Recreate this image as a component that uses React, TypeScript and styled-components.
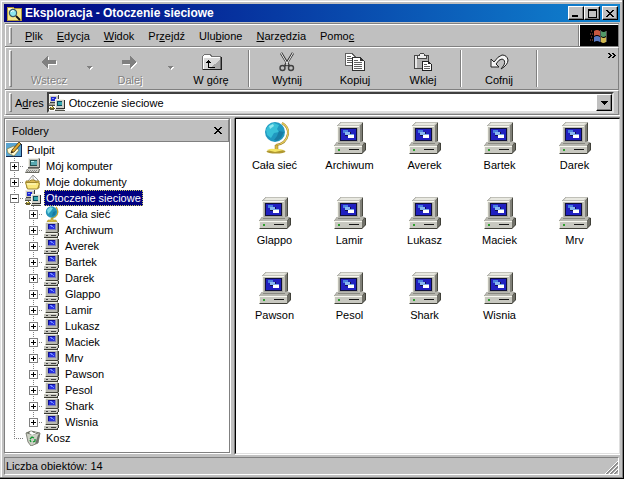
import React from 'react';
import styled, { createGlobalStyle, css } from 'styled-components';

const GlobalStyle = createGlobalStyle`
  * { box-sizing: border-box; }
  html, body { margin: 0; background: #c0c0c0; }
  body, button, select {
    font-family: "Liberation Sans", Arial, sans-serif;
    font-size: 11px;
    line-height: 14px;
    color: #000;
  }
  button { border: 0; padding: 0; background: none; }
  ul { list-style: none; margin: 0; padding: 0; }
  svg { display: block; flex: none; }
`;

const raised = css`
  border: 1px solid;
  border-color: #fff #000 #000 #fff;
  box-shadow: inset -1px -1px #808080;
  background: #c0c0c0;
`;

const Window = styled.div`
  display: flex;
  flex-direction: column;
  min-height: 100vh;
  padding: 4px;
  background: #c0c0c0;
  box-shadow: inset -1px -1px #000, inset -2px -2px #808080, inset 1px 1px #dfdfdf, inset 2px 2px #fff;
`;

const TitleBar = styled.header`
  display: flex;
  align-items: center;
  height: 18px;
  padding: 0 2px;
  background: linear-gradient(to right, #000080, #1084d0);
`;

const Title = styled.h1`
  flex: 1;
  margin: 0 0 0 3px;
  font-size: 12px;
  line-height: 16px;
  font-weight: bold;
  color: #fff;
  white-space: nowrap;
`;

const CaptionButton = styled.button<{ $apart?: boolean }>`
  ${raised}
  display: flex;
  align-items: center;
  justify-content: center;
  width: 16px;
  height: 14px;
  margin-left: ${p => (p.$apart ? 2 : 0)}px;
`;

const Band = styled.div<{ $height: number }>`
  display: flex;
  align-items: stretch;
  height: ${p => p.$height}px;
  padding-left: 2px;
  border: 1px solid;
  border-color: #fff #808080 #808080 #fff;
  box-shadow: 0 -1px #808080;
`;

const Bands = styled.div`
  display: flex;
  flex-direction: column;
  margin-top: 2px;
  padding: 0 1px;
  border-bottom: 1px solid #fff;
`;

const Grip = styled.span`
  flex: none;
  width: 3px;
  margin: 2px 0 2px 1px;
  border: 1px solid;
  border-color: #fff #808080 #808080 #fff;
`;

const MenuList = styled.nav`
  display: flex;
  flex: 1;
  align-items: center;
  padding-left: 6px;
`;

const MenuButton = styled.button`
  padding: 0 7px;
`;

const Throbber = styled.div`
  display: flex;
  align-items: center;
  justify-content: center;
  width: 38px;
  background: #000;
  box-shadow: -1px 0 #fff, -2px 0 #808080;
`;

const Tools = styled.div`
  display: flex;
  flex: 1;
  padding-left: 3px;
`;

const ToolButton = styled.button`
  display: flex;
  flex-direction: column;
  align-items: center;
  width: 68px;
  padding-top: 4px;
  gap: 1px;
  &:disabled {
    color: #808080;
    text-shadow: 1px 1px #fff;
  }
`;

const DropButton = styled.button`
  display: flex;
  align-items: center;
  justify-content: center;
  width: 13px;
`;

const ToolSeparator = styled.span`
  width: 2px;
  margin: 2px 3px;
  border-left: 1px solid #808080;
  border-right: 1px solid #fff;
`;

const Overflow = styled.button`
  align-self: flex-start;
  margin-left: auto;
  padding: 5px 2px 0;
`;

const AddressLabel = styled.label`
  align-self: center;
  padding: 0 3px;
`;

const Combo = styled.div`
  display: flex;
  flex: 1;
  align-items: center;
  margin: 1px 4px 1px 0;
  background: #fff;
  border: 2px solid;
  border-color: #404040 #dfdfdf #dfdfdf #404040;
`;

const ComboSelect = styled.select`
  flex: 1;
  height: 16px;
  margin-left: 4px;
  padding: 0;
  border: 0;
  outline: 0;
  appearance: none;
  background: transparent;
`;

const ComboArrow = styled.span`
  ${raised}
  display: flex;
  align-items: center;
  justify-content: center;
  align-self: stretch;
  width: 16px;
`;

const Body = styled.main`
  display: grid;
  grid-template-columns: 227px minmax(0, 1fr);
  gap: 4px;
  flex: 1;
  margin-top: 2px;
`;

const FolderPane = styled.section`
  display: flex;
  flex-direction: column;
  border: 1px solid;
  border-color: #808080 #fff #fff #808080;
  box-shadow: inset -1px -1px #808080;
`;

const PaneHeader = styled.div`
  display: flex;
  align-items: center;
  justify-content: space-between;
  height: 23px;
  margin-right: 1px;
  padding: 0 6px;
  border: 1px solid;
  border-color: #fff #808080 #808080 #fff;
`;

const PaneTitle = styled.h2`
  margin: 0;
  font-size: 11px;
  line-height: 14px;
  font-weight: normal;
`;

const Tree = styled.ul`
  flex: 1;
  margin: 0 1px 1px 0;
  background: #fff;
`;

const TreeRow = styled.div`
  display: flex;
  align-items: center;
  height: 16px;
  > svg { margin-left: 1px; }
`;

const Guide = styled.span<{ $line?: 'through' | 'last'; $branch?: boolean }>`
  display: flex;
  align-items: center;
  flex: none;
  width: 19px;
  height: 16px;
  padding-left: 5px;
  background-image:
    repeating-linear-gradient(to bottom, #808080 0 1px, transparent 1px 2px),
    repeating-linear-gradient(to right, #808080 0 1px, transparent 1px 2px);
  background-repeat: no-repeat;
  background-position: 9px 0, 9px 8px;
  background-size:
    ${p => (p.$line ? '1px' : '0')} ${p => (p.$line === 'last' ? '8px' : '16px')},
    ${p => (p.$branch ? '10px 1px' : '0 0')};
`;

const Expander = styled.button`
  display: flex;
  width: 9px;
  height: 9px;
  background: #fff;
`;

const TreeLabel = styled.span<{ $selected?: boolean }>`
  margin-left: 3px;
  padding: 0 1px;
  height: 16px;
  line-height: 14px;
  border: 1px dotted transparent;
  white-space: nowrap;
  ${p => p.$selected && css`
    color: #fff;
    background: #000080;
    border-color: #c8c860;
  `}
`;

const FileArea = styled.section`
  display: grid;
  grid-template-columns: repeat(auto-fill, 75px);
  grid-auto-rows: 75px;
  align-content: start;
  background: #fff;
  padding: 3px 0 0 1px;
  border: 1px solid;
  border-color: #000 #dfdfdf #dfdfdf #000;
  box-shadow: 0 -1px #808080, -1px 0 #808080, 0 1px #fff;
`;

const FileItem = styled.button`
  display: flex;
  flex-direction: column;
  align-items: center;
  justify-content: flex-start;
  gap: 4px;
`;

const StatusBar = styled.footer`
  display: flex;
  align-items: center;
  justify-content: space-between;
  height: 18px;
  margin: 3px 1px 0 0;
  padding-left: 1px;
  border: 1px solid;
  border-color: #808080 #fff #fff #808080;
`;

const Svg = ({ w = 16, h = 16, smooth, children }: { w?: number; h?: number; smooth?: boolean; children: React.ReactNode }) => (
  <svg width={w} height={h} viewBox={`0 0 ${w} ${h}`} fill="none" shapeRendering={smooth ? 'auto' : 'crispEdges'} aria-hidden="true">
    {children}
  </svg>
);

/* 16px icons */

const ExplorerIcon = () => (
  <Svg>
    <path d="M1 2h6l1 1h7v12H1z" fill="#f4e68c" stroke="#b09838" />
    <path d="M2 3h4v2H2z" fill="#fffbd0" />
    <g shapeRendering="auto">
      <circle cx="7" cy="8" r="3.6" fill="#8ce8f0" stroke="#385868" strokeWidth="1.2" />
      <path d="M5 7q1-2 3-1" stroke="#fff" />
      <path d="M10 11l4 4" stroke="#101010" strokeWidth="1.8" />
    </g>
  </Svg>
);

const DesktopIcon = () => (
  <Svg>
    <path d="M0 1h15v14H0z" fill="#5aa4d0" />
    <path d="M0 15h16V2h-1v12H0z" fill="#102850" />
    <g shapeRendering="auto">
      <path d="M1 7l7-3 5 4-5 6-6-3z" fill="#fffbd8" stroke="#807840" strokeWidth=".7" />
      <path d="M5 11l1-3 7-8 2 2-7 8z" fill="#e0a830" stroke="#403010" strokeWidth=".8" />
      <path d="M5 11l1-2 1 1z" fill="#000" />
    </g>
  </Svg>
);

const ComputerIcon = () => (
  <Svg smooth>
    <path d="M3 0h11l1 1v9H3z" fill="#585858" />
    <path d="M3 0h11v9H3z" fill="#c0c0b8" />
    <path d="M3 0h10v1H4v8H3z" fill="#f0f0e8" />
    <path d="M5 2h7v6H5z" fill="#205050" />
    <path d="M6 3h6v4H6z" fill="#58a8b0" />
    <path d="M6 3h3v1H6z" fill="#b8f0f0" />
    <path d="M3 10h11v1H3z" fill="#888880" />
    <path d="M2 11h13l-1 4H0z" fill="#686860" />
    <path d="M3 11h11l-1 3H1z" fill="#d8d8d0" />
    <path d="M3 12.5h9M2 13.5h10" stroke="#888" strokeDasharray="1 1" />
  </Svg>
);

const DocumentsIcon = () => (
  <Svg smooth>
    <path d="M3 7l5-6 5 5v5H3z" fill="#fff" stroke="#787878" strokeWidth=".8" />
    <path d="M8 2v3l3 2" stroke="#a0a0a0" strokeWidth=".8" />
    <path d="M1 7h4l1-1h3l1 1h4v7H2z" fill="#dcb850" stroke="#a08830" />
    <path d="M0.5 8.5h12l2 1-2 5.500h-10z" fill="#fae87c" stroke="#a08830" />
    <path d="M2 10h9" stroke="#fffbd0" />
  </Svg>
);

const NetworkIcon = () => (
  <Svg>
    <path d="M1 0h9v8H1z" fill="#404040" />
    <path d="M0 0h9v7H0z" fill="#c8c8c0" />
    <path d="M0 0h9v1H1v6H0z" fill="#f0f0e8" />
    <path d="M2 2h5v4H2z" fill="#2028d0" />
    <path d="M3 3h2v1H3z" fill="#8098ff" />
    <path d="M0 8h7v2H0z" fill="#a8a8a0" />
    <path d="M0 10h7v1H0z" fill="#505048" />
    <path d="M7 5h9v9H7z" fill="#303030" />
    <path d="M6 4h9v9H6z" fill="#d0d0c8" />
    <path d="M6 4h9v1H7v8H6z" fill="#f4f4ec" />
    <path d="M8 6h5v5H8z" fill="#084858" />
    <path d="M9 7h4v3H9z" fill="#38a8b0" />
    <path d="M6 14h9v1H6z" fill="#c8c8c0" />
    <path d="M6 15h10v1H6z" fill="#505048" />
    <path d="M3 11h1v4H3zM0 13h6v1H0zM1 12h4v3H1z" fill="#686030" />
    <path d="M2 12h2v1H2z" fill="#e8d850" />
  </Svg>
);

const GlobeIcon = () => (
  <Svg smooth>
    <path d="M12 1q4 6-1 10l-3 1" stroke="#c8a830" strokeWidth="1.4" />
    <circle cx="7.500" cy="6" r="5.700" fill="#2494b8" />
    <path d="M3 4l3-3 3 1-2 3-3 3z" fill="#78d8e4" />
    <path d="M9 6l3-1-1 4-3 1z" fill="#1878a0" />
    <path d="M7 12h2v2h3l1 2H3l1-2h3z" fill="#d8c040" stroke="#98801c" strokeWidth=".5" />
  </Svg>
);

const HostIcon = () => (
  <Svg>
    <path d="M2 0h12v1h1v10H1V1h1z" fill="#b8b8b0" />
    <path d="M2 0h11v1H2v9H1V1h1z" fill="#ecece4" />
    <path d="M13 1h1v9h-1z" fill="#808078" />
    <path d="M14 1h1v9h-1v1H2v-1h12z" fill="#404038" />
    <path d="M4 2h8v6H4z" fill="#8080b8" />
    <path d="M4 2h7v5H4z" fill="#101090" />
    <path d="M5 3h6v4H5z" fill="#2830e0" />
    <path d="M6 3h2v1H6zM7 4h2v1H7zM9 5h1v1H9z" fill="#7088ff" />
    <path d="M1 11h14v3h-1v2H0v-4h1z" fill="#383830" />
    <path d="M1 11h13v3h-1v1H0v-3h1z" fill="#c4c4bc" />
    <path d="M1 11h12v1H1z" fill="#f4f4ec" />
    <path d="M7 13h5v1H7zM2 13h2v1H2z" fill="#404040" />
  </Svg>
);

const BinIcon = () => (
  <Svg smooth>
    <path d="M1 3l5-2 9 2-2 10-7 3-3-4z" fill="#ccd0c4" stroke="#686c60" strokeWidth=".8" />
    <path d="M1 3l5-2 9 2-8 2z" fill="#686c60" />
    <path d="M4 3l2-2 3 2 3-1-2 2-3 1z" fill="#fff" />
    <path d="M13 5l2-2-2 10-3 1z" fill="#70746c" />
    <path d="M5 9l2-2 2 1M10 9v2l-2 1M6 12l-1-2" stroke="#109830" strokeWidth="1.3" />
  </Svg>
);

/* 32px icons */

const LargeGlobeIcon = () => (
  <Svg w={32} h={32} smooth>
    <path d="M23 1q7 4 6 11-2 10-12 11" stroke="#a08830" strokeWidth="2.200" />
    <path d="M23 1q7 4 6 11-2 10-12 11" stroke="#ecd060" strokeWidth="1.200" />
    <circle cx="16" cy="10" r="10" fill="#2098c0" />
    <path d="M7 8q2-6 8-7l5 2-2 4 2 3-5 1-3 5-4-3z" fill="#38c0d8" />
    <path d="M20 9l5 1-3 6-4 3-3-1 3-4z" fill="#187ca4" />
    <path d="M10 4l4-2 1 2-4 3z" fill="#90e8f0" />
    <path d="M16 23h3v5h-3z" fill="#d8b83c" stroke="#907420" strokeWidth=".5" />
    <ellipse cx="17" cy="29.500" rx="9.500" ry="2" fill="#b09830" />
    <path d="M8 28q4-2 8-1 6 0 9 1l-9 2z" fill="#f4e464" />
  </Svg>
);

const LargeHostIcon = () => (
  <Svg w={32} h={32} smooth>
    <path d="M7 0h21l1 1v18l-3 3H3V4z" fill="#484840" />
    <path d="M7 0h21v2l-2 2v17H3V4z" fill="#c0c0b8" />
    <path d="M7 1h20l-2 2H5z" fill="#e8e8e0" />
    <path d="M26 4l2-2v17l-2 2z" fill="#808078" />
    <path d="M3 4h22v1H4v15H3z" fill="#f8f8f0" />
    <path d="M5 6h19v14H5z" fill="#a8a8a0" />
    <path d="M6 6h17v13H6z" fill="#101038" />
    <path d="M7 7h15v11H7z" fill="#2020c0" />
    <path d="M9 8h5v3H9z" fill="#4880e0" />
    <path d="M11 10h6v4h-6z" fill="#101048" />
    <path d="M11 10h5v3h-5z" fill="#88b8f0" />
    <path d="M14 12h6v4h-6z" fill="#fff" />
    <path d="M14 12h6v1h-6z" fill="#78a8e8" />
    <path d="M3 20h26l3 1v7l-4 4H1l-1-1v-7z" fill="#404038" />
    <path d="M3 20h23l3-1 1 2-2 3H0z" fill="#b8b8b0" />
    <path d="M4 21h22v1H4z" fill="#888880" />
    <path d="M0 24h28v7H0z" fill="#c8c8c0" />
    <path d="M0 24h28v1H1v6H0z" fill="#f8f8f0" />
    <path d="M28 24l3-3v7l-3 3z" fill="#707068" />
    <path d="M15 27h10v1H15z" fill="#181818" />
    <path d="M4 27h2v2H4z" fill="#30a030" />
  </Svg>
);

/* toolbar and caption glyphs */

const ArrowGlyph = ({ right }: { right?: boolean }) => {
  const d = right ? 'M3 8h8V4l7 6-7 6v-4H3z' : 'M18 8h-8V4l-7 6 7 6v-4h8z';
  return (
    <Svg w={22} h={20}>
      <path d={d} fill="#fff" transform="translate(1 1)" />
      <path d={d} fill="#808080" />
    </Svg>
  );
};

const UpGlyph = () => (
  <Svg w={22} h={20}>
    <path d="M2 4h1V3h1V2h7v1h1v1h9v14H2z" fill="#707070" />
    <path d="M3 4h1V3h6v1h1v1h9v12H3z" fill="#fff" />
    <path d="M4 6h16v11H4z" fill="#d8d8d8" />
    <path d="M20 8v9H9z" fill="#a8a8a8" />
    <path d="M3 17h18V5h1v13H3z" fill="#202020" />
    <path d="M8 8h1v1h1v1h1v1H9v4h6v1H8v-5H6v-1h1V9h1z" fill="#000" />
  </Svg>
);

const CutGlyph = () => (
  <Svg w={22} h={20} smooth>
    <path d="M5 1l8 13M17 1L9 14" stroke="#303030" strokeWidth="2.400" />
    <path d="M5 1l7 12M17 1l-7 12" stroke="#f0f0f0" />
    <circle cx="6.500" cy="16" r="2.500" stroke="#404040" strokeWidth="1.400" />
    <circle cx="15" cy="16" r="2.500" stroke="#404040" strokeWidth="1.400" />
  </Svg>
);

const CopyGlyph = () => (
  <Svg w={22} h={20}>
    <path d="M1 1h8v1h1v1h1v1h1v10H1z" fill="#606060" />
    <path d="M2 2h6v1h1v1h1v1h1v8H2z" fill="#fff" />
    <path d="M3 4h4v1H3zM3 6h6v1H3zM3 8h6v1H3zM3 10h6v1H3z" fill="#606060" />
    <path d="M8 5h9v1h1v1h1v1h1v1h1v10H8z" fill="#303030" />
    <path d="M9 6h7v3h4v9H9z" fill="#fff" />
    <path d="M10 8h4v1h-4zM10 10h8v1h-8zM10 12h8v1h-8zM10 14h8v1h-8zM10 16h8v1h-8z" fill="#606060" />
  </Svg>
);

const PasteGlyph = () => (
  <Svg w={22} h={20}>
    <path d="M2 3h15v14H2z" fill="#484848" />
    <path d="M3 4h13v12H3z" fill="#b0b0b0" />
    <path d="M3 4h2v12H3z" fill="#e8e8e8" />
    <path d="M5 3h2V2h1V1h4v1h1v1h2v4H5z" fill="#484848" />
    <path d="M6 4h2V2h4v2h2v2H6z" fill="#f0f0f0" />
    <path d="M10 9h7v1h1v1h1v1h1v7H10z" fill="#202020" />
    <path d="M11 10h5v2h3v6h-8z" fill="#fff" />
    <path d="M12 12h3v1h-3zM12 14h6v1h-6zM12 16h6v1h-6z" fill="#606060" />
  </Svg>
);

const UndoGlyph = () => (
  <Svg w={22} h={20} smooth>
    <path d="M3 7v8h8l-3-3q3-5 6-5 4 1 2 6l-3 4q7-4 7-9-1-5-6-5-4 1-8 7z" fill="#f4f4f4" stroke="#202020" strokeWidth="1" />
  </Svg>
);

const DisabledTriangle = () => (
  <Svg w={7} h={5}>
    <path d="M1 1h6L4 4z" fill="#fff" />
    <path d="M0 0h6L3 3z" fill="#808080" />
  </Svg>
);

const DownTriangle = () => (
  <Svg w={7} h={4}><path d="M0 0h7v1H6v1H5v1H4v1H3V3H2V2H1V1H0z" fill="#000" /></Svg>
);

const CloseGlyph = () => (
  <Svg w={8} h={7}><path d="M0 0h2v1h1v1h2V1h1V0h2v1H7v1H6v1H5v1h1v1h1v1h1v1H6V6H5V5H3v1H2v1H0V6h1V5h1V4h1V3H2V2H1V1H0z" fill="#000" /></Svg>
);

const ChevronGlyph = () => (
  <Svg w={8} h={5}><path d="M0 0h2v1h1v1h1v1H3v1H2v1H0V4h1V3h1V2H1V1H0zM4 0h2v1h1v1h1v1H7v1H6v1H4V4h1V3h1V2H5V1H4z" fill="#000" /></Svg>
);

const FlagGlyph = () => (
  <Svg w={18} h={16} smooth>
    <path d="M1 3h2M0 6h3M1 9h2M0 12h3" stroke="#b05840" strokeDasharray="1 1" />
    <path d="M4 3q3-2 6 0v5q-3-2-6 0z" fill="#c85840" />
    <path d="M11 3q3 2 5 0v5q-3 2-5 0z" fill="#509868" />
    <path d="M4 9q3-2 6 0v5q-3-2-6 0z" fill="#5878c0" />
    <path d="M11 9q3 2 5 0v5q-3 2-5 0z" fill="#d0b850" />
    <path d="M10.500 2v12M16.500 3v11" stroke="#888" strokeWidth=".6" />
  </Svg>
);

const ResizeGrip = () => (
  <Svg w={14} h={15} smooth>
    <path d="M1 15L14 2M5 15l9-9M9 15l5-5" stroke="#fff" />
    <path d="M2 15L14 3M3 15L14 4M6 15l8-8M7 15l7-7M10 15l4-4M11 15l3-3" stroke="#808080" strokeWidth=".8" />
  </Svg>
);

const ToggleGlyph = ({ open }: { open?: boolean }) => (
  <Svg w={9} h={9}>
    <path d="M0 0h9v9H0zM1 1v7h7V1z" fill="#808080" fillRule="evenodd" />
    <path d={open ? 'M2 4h5v1H2z' : 'M2 4h2V2h1v2h2v1H5v2H4V5H2z'} fill="#000" />
  </Svg>
);

const hosts = ['Archiwum', 'Averek', 'Bartek', 'Darek', 'Glappo', 'Lamir', 'Lukasz', 'Maciek', 'Mrv', 'Pawson', 'Pesol', 'Shark', 'Wisnia'];
const places = ['Cała sieć', ...hosts];

const menus: [string, string, string][] = [
  ['', 'P', 'lik'], ['', 'E', 'dycja'], ['', 'W', 'idok'], ['Pr', 'z', 'ejdź'],
  ['Ulu', 'b', 'ione'], ['', 'N', 'arzędzia'], ['Pomo', 'c', ''],
];

type BranchProps = { label: string; icon: React.ReactNode; open?: boolean; leaf?: boolean; nested?: boolean; last?: boolean; children?: React.ReactNode };

const Branch = ({ label, icon, open, leaf, nested, last, children }: BranchProps) => (
  <li role="treeitem" aria-expanded={leaf ? undefined : !!open} aria-selected={!!open}>
    <TreeRow>
      {nested && <Guide $line="through" />}
      <Guide $line={last ? 'last' : 'through'} $branch>
        {!leaf && (
          <Expander aria-label={`${open ? 'Zwiń' : 'Rozwiń'} ${label}`}><ToggleGlyph open={open} /></Expander>
        )}
      </Guide>
      {icon}
      <TreeLabel $selected={open}>{label}</TreeLabel>
    </TreeRow>
    {children}
  </li>
);

export default function App() {
  return (
    <>
      <GlobalStyle />
      <Window>
        <TitleBar>
          <ExplorerIcon />
          <Title>Eksploracja - Otoczenie sieciowe</Title>
          <CaptionButton aria-label="Minimalizuj"><Svg w={8} h={7}><path d="M0 5h6v2H0z" fill="#000" /></Svg></CaptionButton>
          <CaptionButton aria-label="Maksymalizuj"><Svg w={9} h={9}><path d="M0 0h9v9H0zM1 2v6h7V2z" fill="#000" fillRule="evenodd" /></Svg></CaptionButton>
          <CaptionButton aria-label="Zamknij" $apart><CloseGlyph /></CaptionButton>
        </TitleBar>

        <Bands>
          <Band $height={23}>
            <Grip />
            <MenuList>
              {menus.map(([before, key, after]) => (
                <MenuButton key={before + key + after}>{before}<u>{key}</u>{after}</MenuButton>
              ))}
            </MenuList>
            <Throbber><FlagGlyph /></Throbber>
          </Band>
          <Band $height={43}>
            <Grip />
            <Tools>
              <ToolButton disabled><ArrowGlyph />Wstecz</ToolButton>
              <DropButton disabled aria-label="Historia wstecz"><DisabledTriangle /></DropButton>
              <ToolButton disabled><ArrowGlyph right />Dalej</ToolButton>
              <DropButton disabled aria-label="Historia dalej"><DisabledTriangle /></DropButton>
              <ToolButton><UpGlyph />W górę</ToolButton>
              <ToolSeparator />
              <ToolButton><CutGlyph />Wytnij</ToolButton>
              <ToolButton><CopyGlyph />Kopiuj</ToolButton>
              <ToolButton><PasteGlyph />Wklej</ToolButton>
              <ToolSeparator />
              <ToolButton><UndoGlyph />Cofnij</ToolButton>
              <ToolSeparator />
              <Overflow aria-label="Więcej"><ChevronGlyph /></Overflow>
            </Tools>
          </Band>
          <Band $height={25}>
            <Grip />
            <AddressLabel htmlFor="address">A<u>d</u>res</AddressLabel>
            <Combo>
              <NetworkIcon />
              <ComboSelect id="address"><option>Otoczenie sieciowe</option></ComboSelect>
              <ComboArrow aria-hidden="true"><DownTriangle /></ComboArrow>
            </Combo>
          </Band>
        </Bands>

        <Body>
          <FolderPane>
            <PaneHeader>
              <PaneTitle>Foldery</PaneTitle>
              <button aria-label="Zamknij foldery"><CloseGlyph /></button>
            </PaneHeader>
            <Tree role="tree">
              <li role="treeitem" aria-expanded="true">
                <TreeRow><DesktopIcon /><TreeLabel>Pulpit</TreeLabel></TreeRow>
                <ul role="group">
                  <Branch label="Mój komputer" icon={<ComputerIcon />} />
                  <Branch label="Moje dokumenty" icon={<DocumentsIcon />} />
                  <Branch label="Otoczenie sieciowe" icon={<NetworkIcon />} open>
                    <ul role="group">
                      {places.map((name, i) => (
                        <Branch key={name} label={name} icon={i ? <HostIcon /> : <GlobeIcon />} nested last={i === places.length - 1} />
                      ))}
                    </ul>
                  </Branch>
                  <Branch label="Kosz" icon={<BinIcon />} leaf last />
                </ul>
              </li>
            </Tree>
          </FolderPane>
          <FileArea aria-label="Otoczenie sieciowe">
            {places.map((name, i) => (
              <FileItem key={name}>{i ? <LargeHostIcon /> : <LargeGlobeIcon />}{name}</FileItem>
            ))}
          </FileArea>
        </Body>

        <StatusBar><span>Liczba obiektów: 14</span><ResizeGrip /></StatusBar>
      </Window>
    </>
  );
}
